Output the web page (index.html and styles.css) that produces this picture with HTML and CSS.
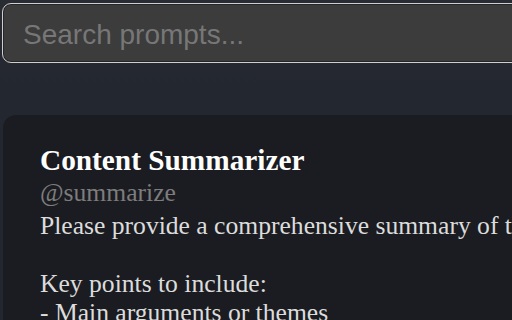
FILE: index.html
```html
<!DOCTYPE html>
<html>
<head>
<meta charset="utf-8">
<link rel="stylesheet" href="styles.css">
</head>
<body>
<div class="app">
  <div class="search-wrap">
    <input class="search" type="text" placeholder="Search prompts...">
  </div>
  <div class="card">
    <div class="title">Content Summarizer</div>
    <div class="handle">@summarize</div>
    <div class="desc">Please provide a comprehensive summary of the following content:

Key points to include:
- Main arguments or themes
- Supporting evidence</div>
  </div>
</div>
</body>
</html>
```
FILE: styles.css
```css
html, body {
  margin: 0;
  padding: 0;
  width: 512px;
  height: 320px;
  overflow: hidden;
  background: #232730;
}
.app {
  width: 900px;
  background: linear-gradient(#2a2c33 0px, #232730 90px);
  min-height: 320px;
  display: flex;
  flex-direction: column;
}
.search-wrap {
  padding: 3px 0 0 2px;
}
.search {
  box-sizing: border-box;
  width: 880px;
  height: 60px;
  margin: 0;
  padding: 4px 0 0 20px;
  border: 1px solid #cfcfcf;
  border-radius: 9px;
  box-shadow: inset 0 0 0 1px #262626;
  background: #3c3c3c;
  color: #e0e0e0;
  font-family: "Liberation Sans", Arial, sans-serif;
  font-size: 28px;
  outline: none;
}
.search::placeholder {
  color: #777777;
}
.card {
  margin: 52px 0 0 3px;
  width: 860px;
  height: 260px;
  background: #1b1c21;
  border-radius: 13px;
  padding: 29px 0 0 37px;
  font-family: "Liberation Serif", "Times New Roman", serif;
}
.title {
  font-size: 29.3px;
  font-weight: bold;
  color: #ffffff;
  line-height: 32px;
}
.handle {
  font-size: 25.6px;
  color: #7d7d7d;
  line-height: 28px;
  margin-top: 3px;
}
.desc {
  font-size: 25.6px;
  color: #dcdcdc;
  line-height: 29px;
  margin-top: 4px;
  white-space: pre;
}
```
